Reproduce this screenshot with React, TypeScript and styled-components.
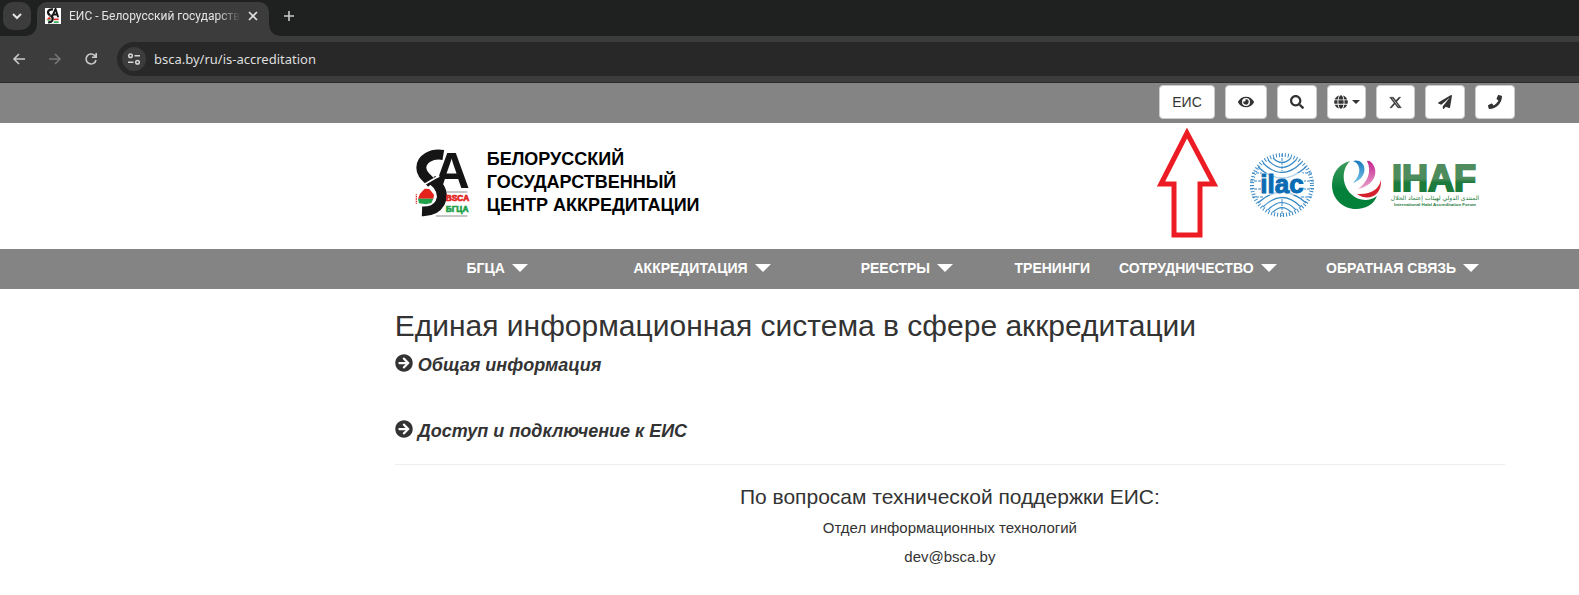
import React from "react";
import styled, { createGlobalStyle } from "styled-components";
import { FaEye, FaSearch, FaGlobe, FaPaperPlane, FaPhone, FaArrowCircleRight } from "react-icons/fa";
import { FaXTwitter } from "react-icons/fa6";

const GlobalStyle = createGlobalStyle`
  *, *::before, *::after { box-sizing: border-box; }
  body {
    margin: 0;
    background: #fff;
    color: #333;
    font: 14px/20px "Liberation Sans", Arial, sans-serif;
  }
  button, input { font: inherit; }
  a { color: inherit; text-decoration: none; }
`;

/* ---------- browser frame ---------- */

const TabStrip = styled.div`
  display: flex;
  align-items: flex-start;
  height: 36px;
  padding: 2px 3px 0;
  background: #1f2020;
`;

const ChromeButton = styled.button<{ $size?: number; $fill?: string; $color?: string; $round?: string }>`
  display: flex;
  flex: none;
  align-items: center;
  justify-content: center;
  width: ${(p) => p.$size ?? 28}px;
  height: ${(p) => p.$size ?? 28}px;
  padding: 0;
  border: 0;
  border-radius: ${(p) => p.$round ?? "50%"};
  background: ${(p) => p.$fill ?? "transparent"};
  color: ${(p) => p.$color ?? "#c9c9c9"};
`;

const Tab = styled.div`
  position: relative;
  display: flex;
  align-items: center;
  width: 232px;
  height: 34px;
  margin: 0 6px;
  padding: 0 6px 6px 8px;
  border-radius: 10px 10px 0 0;
  background: #3c3c3c;
  color: #e3e3e3;

  &::before,
  &::after {
    content: "";
    position: absolute;
    bottom: 0;
    width: 10px;
    height: 10px;
  }
  &::before {
    right: 100%;
    background: radial-gradient(circle at 0 0, transparent 9px, #3c3c3c 10px);
  }
  &::after {
    left: 100%;
    background: radial-gradient(circle at 100% 0, transparent 9px, #3c3c3c 10px);
  }
`;

const TabTitle = styled.span`
  flex: 1;
  margin: 0 2px 0 8px;
  overflow: hidden;
  white-space: nowrap;
  font: 12px/18px Roboto, sans-serif;
  mask-image: linear-gradient(to right, #000 86%, transparent);
`;

const Toolbar = styled.div`
  display: flex;
  align-items: center;
  gap: 8px;
  height: 47px;
  padding-left: 5px;
  background: #3c3c3c;
  border-bottom: 1px solid #2c2c2c;
`;

const AddressBar = styled.label`
  display: flex;
  flex: 1;
  align-items: center;
  gap: 8px;
  height: 34px;
  margin-left: 4px;
  padding-left: 5px;
  border-radius: 17px 0 0 17px;
  background: #282828;
`;

const AddressInput = styled.input`
  flex: 1;
  min-width: 0;
  padding: 0;
  border: 0;
  outline: 0;
  background: none;
  color: #dedede;
  font: 13px/20px "Noto Sans", sans-serif;
`;

/* ---------- page ---------- */

const TopBar = styled.div`
  display: flex;
  justify-content: flex-end;
  gap: 10px;
  height: 40px;
  padding: 2px 64px 0 0;
  background: #848484;
`;

const ToolButton = styled.button<{ $width?: number }>`
  display: flex;
  align-items: center;
  justify-content: center;
  gap: 4px;
  width: ${(p) => p.$width ?? 40}px;
  height: 34px;
  padding: 0;
  border: 1px solid #ccc;
  border-radius: 4px;
  background: #fff;
  color: #333;
`;

const Caret = styled.span`
  border: 4px solid transparent;
  border-top-color: currentColor;
  border-bottom: 0;
`;

const Column = styled.div`
  margin: 0 74px 0 25%;
`;

const Header = styled(Column).attrs({ as: "header" })`
  position: relative;
  display: flex;
  align-items: center;
  height: 126px;
  padding: 0 26px 0 20px;
`;

const Brand = styled.a`
  display: flex;
  align-items: center;
  gap: 16px;
  flex: 1;
  padding-bottom: 6px;
`;

const BrandName = styled.span`
  padding-bottom: 2px;
  color: #000;
  font-size: 18px;
  line-height: 23px;
  font-weight: 700;
  white-space: nowrap;
`;

const Partners = styled.div`
  display: flex;
  align-items: center;
  gap: 16px;
  padding-bottom: 2px;
`;

const Pointer = styled.svg`
  position: absolute;
  top: 5px;
  right: 286px;
`;

const NavBar = styled.nav`
  height: 40px;
  background: #848484;
`;

const NavList = styled(Column)`
  display: grid;
  grid-template-columns: 1fr 1fr 1fr 86px 1fr 1fr;
`;

const NavLink = styled.a`
  display: flex;
  align-items: center;
  justify-content: center;
  gap: 7px;
  height: 38px;
  color: #fff;
  font-weight: 700;
  white-space: nowrap;
`;

const NavCaret = styled.span`
  border: 8px solid transparent;
  border-top-color: currentColor;
  border-bottom: 0;
`;

const Title = styled.h2`
  margin: 20px 0 10px;
  font-size: 30px;
  line-height: 33px;
  font-weight: 400;
`;

const Section = styled.a`
  display: flex;
  gap: 5px;
  height: 20px;
  margin-bottom: 46px;
  font-size: 18px;
  line-height: 26px;
  font-weight: 700;
  font-style: italic;

  &:last-of-type {
    margin-bottom: 0;
  }
  svg {
    margin-top: 2px;
  }
`;

const Support = styled.section`
  margin-top: 26px;
  padding-top: 20px;
  border-top: 1px solid #eee;
  text-align: center;
`;

const SupportTitle = styled.h3`
  margin: 0 0 9px;
  font-size: 21px;
  line-height: 24px;
  font-weight: 400;
`;

const SupportLine = styled.p`
  margin: 0 0 9px;
  font-size: 15px;
  line-height: 20px;
`;

function BscaLogo({ width, height, small }: { width: number; height: number; small?: boolean }) {
  return (
    <svg width={width} height={height} viewBox="15 8 168 207" overflow="visible" role="img" aria-label="BSCA">
      <path d="M100 26C64 20 34 38 34 64C34 86 52 94 66 112" fill="none" stroke="#151515" strokeWidth="30" />
      {small ? (
        <path d="M88 118L132 20L166 128M104 92H152" fill="none" stroke="#151515" strokeWidth="24" />
      ) : (
        <text x="70" y="126" fontFamily="Liberation Sans, sans-serif" fontWeight="700" fontSize="152" fill="#151515" stroke="#fff" strokeWidth="5" paintOrder="stroke">A</text>
      )}
      <path d="M66 100C94 122 102 146 90 170C80 188 64 196 36 195" fill="none" stroke="#151515" strokeWidth="29" />
      <path d="M40 116L88 88" stroke="#fff" strokeWidth="5" />
      <path d="M24 157L30 142L44 127L58 128L72 145L70 157Z" fill="#e3231b" />
      <path d="M24 157H70L64 170L48 174L27 171Z" fill="#1fa14a" />
      <path d="M19 144V174" stroke="#e3231b" strokeWidth="4" strokeDasharray="3 2" />
      <path d="M110 137H172M78 209H172" stroke="#555" strokeWidth="2" />
      {small ? (
        <g strokeWidth="20">
          <path d="M110 155H172" stroke="#e3231b" />
          <path d="M110 190H172" stroke="#1fa14a" />
        </g>
      ) : (
        <g fontFamily="Liberation Sans, sans-serif" fontWeight="700" fontSize="25" strokeWidth="2">
          <text x="107" y="164" fill="#e3231b" stroke="#e3231b">BSCA</text>
          <text x="107" y="198" fill="#1fa14a" stroke="#1fa14a">БГЦА</text>
        </g>
      )}
    </svg>
  );
}

function IlacLogo() {
  return (
    <svg width="66" height="66" viewBox="-33 -33 66 66" role="img" aria-label="ilac">
      <g fill="none" stroke="#3a8ac6">
        <circle r="30" strokeWidth="4" strokeDasharray="1 2" />
        <path d="M-9-27Q0-18 9-27M-14-25Q0-10 14-25M-19-22Q0-3 19-22M-24-18Q0 4 24-18M-9 27Q0 18 9 27M-14 25Q0 10 14 25M-19 22Q0 3 19 22M-24 18Q0-4 24 18" strokeWidth="1.2" />
        <path d="M-30-12H-20M-32-4H-20M-32 4H-20M-30 12H-18M30-12H20M32-4H22M32 4H22M30 12H18M0-31V-14M0 14V31" strokeWidth="1" strokeDasharray="3 1" />
      </g>
      <path d="M-21-12H21V10H-21Z" fill="#fff" opacity="0.6" />
      <text y="8" textAnchor="middle" fontFamily="Liberation Sans, sans-serif" fontWeight="700" fontSize="26" fill="#0b6bb3" stroke="#0b6bb3">ilac</text>
    </svg>
  );
}

function IhafLogo() {
  return (
    <svg width="148" height="54" viewBox="0 0 148 54" role="img" aria-label="IHAF">
      <defs>
        <linearGradient id="ihafGreen" x1="0" y1="0" x2="0" y2="1">
          <stop offset="0" stopColor="#3f9a5d" />
          <stop offset="0.6" stopColor="#03803a" />
        </linearGradient>
        <linearGradient id="ihafWord" x1="0" y1="0" x2="0" y2="1">
          <stop offset="0.5" stopColor="#4f8c5d" />
          <stop offset="0.6" stopColor="#1c7a3c" />
        </linearGradient>
        <linearGradient id="ihafBlue" x1="0" y1="0" x2="0" y2="1">
          <stop offset="0" stopColor="#1679bd" />
          <stop offset="1" stopColor="#7ac3e8" />
        </linearGradient>
        <linearGradient id="ihafPink" x1="0" y1="0" x2="0" y2="1">
          <stop offset="0" stopColor="#c4238c" />
          <stop offset="1" stopColor="#e9a3cd" />
        </linearGradient>
      </defs>
      <path d="M19 3C7 6 1 16 1 27C1 41 12 51 25 51C35 51 43 46 46 38C38 44 27 43 20 36C11 27 10 12 19 3Z" fill="url(#ihafGreen)" />
      <path d="M22 3C30 6 31 16 22 25C35 21 37 7 28 3Q25 2 22 3Z" fill="url(#ihafBlue)" />
      <path d="M36 3C41 13 37 24 27 31C42 28 49 15 41 5Q38 2 36 3Z" fill="url(#ihafPink)" />
      <path d="M50 22C48 31 40 37 26 36C37 44 51 38 50 22Z" fill="#d3222d" />
      <text x="61" y="33" fontFamily="Liberation Sans, sans-serif" fontWeight="700" fontSize="36" fill="url(#ihafWord)" stroke="url(#ihafWord)" strokeWidth="2">IHAF</text>
      <g textAnchor="middle" fontFamily="DejaVu Sans, sans-serif" fill="#1c7a3c">
        <text x="104" y="42" fontSize="6" direction="rtl">المنتدى الدولي لهيئات إعتماد الحلال</text>
        <text x="104" y="48" fontFamily="Liberation Sans, sans-serif" fontWeight="700" fontSize="4.4">International Halal Accreditation Forum</text>
      </g>
    </svg>
  );
}

const navItems = [
  { label: "БГЦА", menu: true },
  { label: "АККРЕДИТАЦИЯ", menu: true },
  { label: "РЕЕСТРЫ", menu: true },
  { label: "ТРЕНИНГИ", menu: false },
  { label: "СОТРУДНИЧЕСТВО", menu: true },
  { label: "ОБРАТНАЯ СВЯЗЬ", menu: true },
];

const line = { fill: "none", stroke: "currentColor", strokeWidth: 2 };

export default function App() {
  return (
    <>
      <GlobalStyle />
      <TabStrip>
        <ChromeButton $fill="#3c3c3c" $round="10px" $color="#e3e3e3" aria-label="Search tabs">
          <svg width="10" height="8" viewBox="0 0 10 8" {...line}><path d="M1 2L5 6L9 2" /></svg>
        </ChromeButton>
        <Tab>
          <svg width="16" height="16">
            <rect width="16" height="16" fill="#fff" />
            <svg x="1" width="14" height="16"><BscaLogo width={14} height={16} small /></svg>
          </svg>
          <TabTitle>ЕИС - Белорусский государств</TabTitle>
          <ChromeButton $size={20} $color="#e3e3e3" aria-label="Close tab">
            <svg width="10" height="10" viewBox="0 0 10 10" {...line} strokeWidth={1.6}><path d="M1 1L9 9M9 1L1 9" /></svg>
          </ChromeButton>
        </Tab>
        <ChromeButton aria-label="New tab">
          <svg width="12" height="12" viewBox="0 0 12 12" {...line} strokeWidth={1.6}><path d="M6 1V11M1 6H11" /></svg>
        </ChromeButton>
      </TabStrip>
      <Toolbar>
        <ChromeButton aria-label="Back">
          <svg width="14" height="12" viewBox="0 0 14 12" {...line} strokeWidth={1.6}><path d="M13 6H2M7 1L2 6L7 11" /></svg>
        </ChromeButton>
        <ChromeButton $color="#757575" aria-label="Forward">
          <svg width="14" height="12" viewBox="0 0 14 12" {...line} strokeWidth={1.6}><path d="M1 6H12M7 1L12 6L7 11" /></svg>
        </ChromeButton>
        <ChromeButton aria-label="Reload">
          <svg width="14" height="14" viewBox="0 0 14 14" {...line} strokeWidth={1.6}><path d="M12 8A5 5 0 1 1 10.6 3.4L12 5M12.2 1V5.2H8" /></svg>
        </ChromeButton>
        <AddressBar>
          <ChromeButton $size={24} $fill="#3c3c3c" $color="#d6d6d6" as="span">
            <svg width="14" height="12" viewBox="0 0 14 12" {...line} strokeWidth={1.5}>
              <circle cx="3.5" cy="2.8" r="1.8" /><path d="M7.5 2.8H13M1 9.2H6.5" /><circle cx="10.5" cy="9.2" r="1.8" />
            </svg>
          </ChromeButton>
          <AddressInput aria-label="Address" defaultValue="bsca.by/ru/is-accreditation" />
        </AddressBar>
      </Toolbar>

      <TopBar>
        <ToolButton $width={56}>ЕИС</ToolButton>
        <ToolButton $width={42} aria-label="Версия для слабовидящих"><FaEye size={16} /></ToolButton>
        <ToolButton aria-label="Поиск"><FaSearch size={14} /></ToolButton>
        <ToolButton $width={39} aria-label="Язык"><FaGlobe size={14} /><Caret /></ToolButton>
        <ToolButton $width={39} aria-label="X"><FaXTwitter size={13} stroke="currentColor" strokeWidth={16} /></ToolButton>
        <ToolButton aria-label="Telegram"><FaPaperPlane size={14} /></ToolButton>
        <ToolButton aria-label="Телефон"><FaPhone size={14} /></ToolButton>
      </TopBar>

      <Header>
        <Brand href="#">
          <BscaLogo width={56} height={69} />
          <BrandName>
            БЕЛОРУССКИЙ<br />ГОСУДАРСТВЕННЫЙ<br />ЦЕНТР АККРЕДИТАЦИИ
          </BrandName>
        </Brand>
        <Pointer width="62" height="112" viewBox="0 0 62 112" fill="none" stroke="#ed1c24" strokeWidth="5">
          <path d="M30 5L4 56H17V107H43V56H57Z" />
        </Pointer>
        <Partners>
          <IlacLogo />
          <IhafLogo />
        </Partners>
      </Header>

      <NavBar>
        <NavList>
          {navItems.map((item) => (
            <NavLink key={item.label} href="#">
              {item.label}
              {item.menu && <NavCaret />}
            </NavLink>
          ))}
        </NavList>
      </NavBar>

      <Column as="main">
        <Title>Единая информационная система в сфере аккредитации</Title>
        <Section href="#"><FaArrowCircleRight size={18} />Общая информация</Section>
        <Section href="#"><FaArrowCircleRight size={18} />Доступ и подключение к ЕИС</Section>
        <Support>
          <SupportTitle>По вопросам технической поддержки ЕИС:</SupportTitle>
          <SupportLine>Отдел информационных технологий</SupportLine>
          <SupportLine><a href="mailto:dev@bsca.by">dev@bsca.by</a></SupportLine>
        </Support>
      </Column>
    </>
  );
}
